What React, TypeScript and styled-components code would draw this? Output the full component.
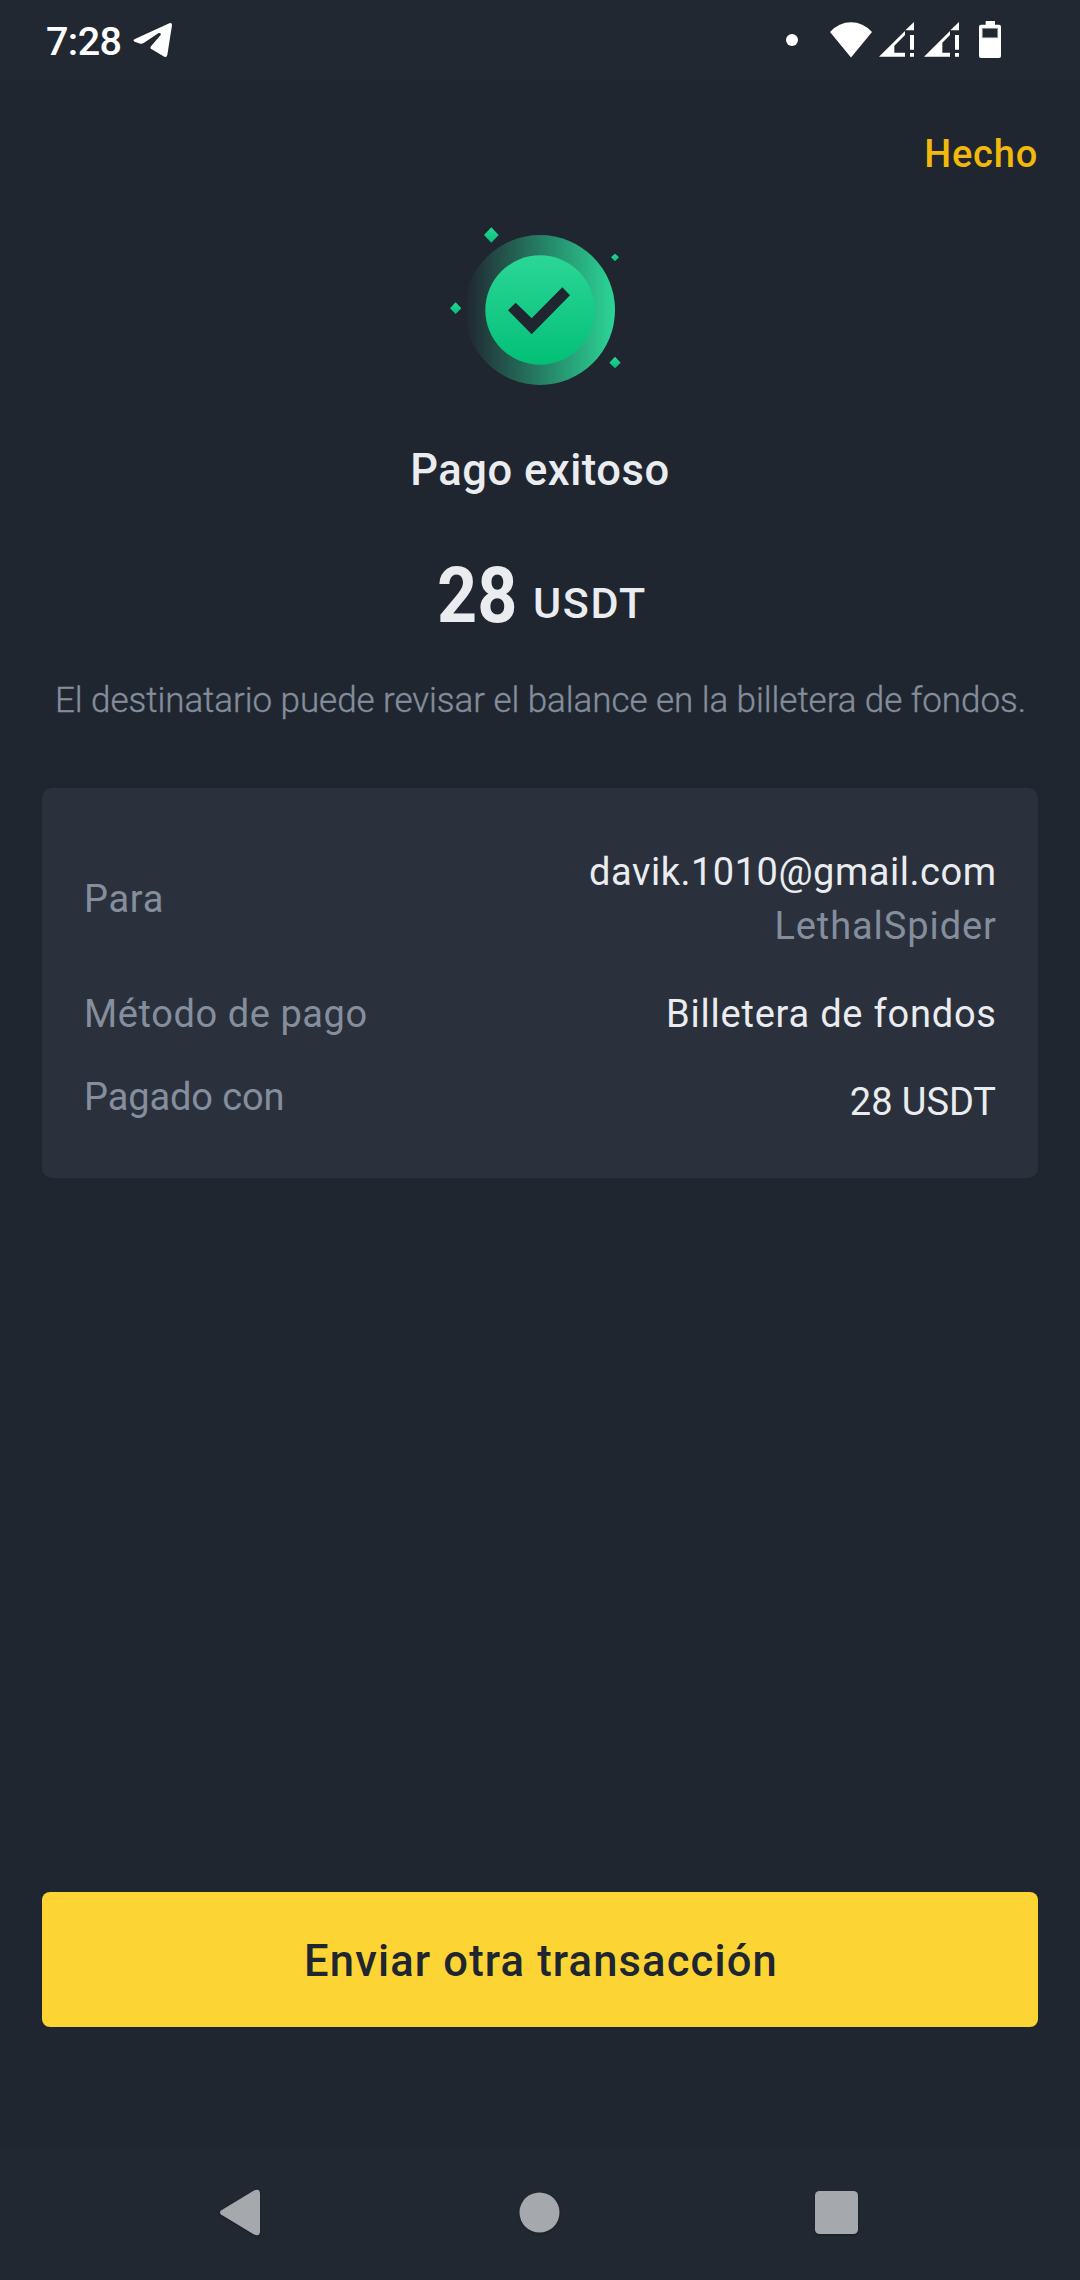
import React from "react";
import styled, { createGlobalStyle } from "styled-components";

const GlobalStyle = createGlobalStyle`
  * { box-sizing: border-box; }
  body { margin: 0; background: #202630; }
  svg { display: block; flex: none; }
`;

const Screen = styled.div`
  display: flex;
  flex-direction: column;
  width: 1080px;
  height: 2280px;
  background: #202630;
  color: #eaecef;
  font-family: Roboto, "Liberation Sans", sans-serif;
  overflow: hidden;
`;
const StatusBar = styled.header`
  display: flex;
  align-items: center;
  height: 80px;
  padding: 0 79px 0 46px;
  background: #222832;
`;
const Clock = styled.span`
  padding-top: 4px;
  color: #fff;
  font-size: 39.5px;
  font-weight: 500;
  line-height: 50px;
  letter-spacing: -0.6px;
`;
const StatusIcons = styled.div`
  display: flex;
  margin-left: auto;
`;
const Slot = styled.div<{ $gap: number }>`
  margin-left: ${(p) => p.$gap}px;
`;
const TopActions = styled.div`
  display: flex;
  justify-content: flex-end;
  height: 130px;
  padding: 49px 42px 0 0;
`;
const Done = styled.a`
  color: #f0b90b;
  font-size: 38px;
  font-weight: 500;
  line-height: 50px;
  letter-spacing: 0.8px;
`;
const Main = styled.main`
  display: flex;
  flex-direction: column;
  align-items: center;
  flex: 1;
`;
const Title = styled.h1`
  margin: 41px 0 0;
  font-size: 43.5px;
  font-weight: 500;
  line-height: 60px;
  letter-spacing: 0.52px;
  white-space: nowrap;
`;
const Amount = styled.div`
  display: flex;
  gap: 15.5px;
  height: 90px;
  margin: 49px 0 0 4px;
`;
const Value = styled.span`
  margin-right: -9px;
  font-size: 78px;
  font-weight: 700;
  line-height: 91px;
  transform: scaleX(0.897);
  transform-origin: left;
`;
const Unit = styled.span`
  margin-top: 23px;
  font-size: 43px;
  font-weight: 500;
  line-height: 60px;
  letter-spacing: 1.6px;
`;
const Hint = styled.p`
  margin: 36px 0 0 1px;
  color: #848e9c;
  font-size: 35px;
  font-weight: 300;
  line-height: 50px;
  letter-spacing: -0.06px;
  white-space: nowrap;
  -webkit-text-stroke: 0.35px #848e9c;
`;
const Card = styled.section`
  display: flex;
  flex-direction: column;
  gap: 34px;
  width: 996px;
  height: 390px;
  margin-top: 62px;
  padding: 57px 42px 49px;
  border-radius: 10px;
  background: #2b313c;
`;
const Row = styled.div<{ $top?: boolean }>`
  display: flex;
  justify-content: space-between;
  align-items: ${(p) => (p.$top ? "flex-start" : "center")};
`;
const Label = styled.span<{ $line?: number; $track: number }>`
  color: #848e9c;
  font-size: 38px;
  line-height: ${(p) => p.$line ?? 54}px;
  letter-spacing: ${(p) => p.$track}px;
`;
const Values = styled.div`
  display: flex;
  flex-direction: column;
  align-items: flex-end;
`;
const Detail = styled.span<{ $muted?: boolean; $track: number }>`
  margin-right: ${(p) => -p.$track}px;
  color: ${(p) => (p.$muted ? "#848e9c" : "#eaecef")};
  font-size: 38px;
  line-height: 54px;
  letter-spacing: ${(p) => p.$track}px;
`;
const Primary = styled.button`
  width: 996px;
  height: 135px;
  margin: auto 0 121px;
  padding: 5px 0 0 2px;
  border: 0;
  border-radius: 8px;
  background: #fcd535;
  color: #202630;
  font: 500 43.5px/60px Roboto, "Liberation Sans", sans-serif;
  letter-spacing: 1.16px;
`;
const NavBar = styled.nav`
  display: flex;
  height: 132px;
  background: #222832;
`;
const NavIcons = styled.svg`
  filter: drop-shadow(0 1px 1px rgba(0, 0, 0, 0.3));
`;

const Telegram = () => (
  <svg width="40" height="36" viewBox="400 70 120 108" fill="#fff">
    <path d="M404 122L509 74Q517 71 517 80L503 169Q501 177 494 174L455 151Q450 148 454 143L483 109Q485 102 477 103L432 133Q428 136 422 135L405 129Q399 126 404 122Z" />
  </svg>
);
const Wifi = () => (
  <svg width="42" height="40" viewBox="0 0 42 40">
    <path d="M0 12Q9 2.300 21 2.300T42 12L21 37.500Z" fill="#fff" />
  </svg>
);
const Signal = ({ notch }: { notch: number }) => (
  <svg width="35" height="40" viewBox="0 60 105 120" fill="#fff">
    <path d={`M0 170.500L78 93V105L${notch} ${183 - notch}V158H78V170.500ZM105 66V91H79ZM93 105H105V149H93ZM93 159H105V170.500H93Z`} />
  </svg>
);
const Battery = () => (
  <svg width="22" height="40" viewBox="0 60 66 120">
    <path d="M20 63H48V74H60Q66 74 66 80V168Q66 174 60 174H6Q0 174 0 168V80Q0 74 6 74H20Z" fill="#fff" />
    <path d="M10 85H56V113H10Z" fill="#222832" stroke="#969a9f" strokeWidth="2" />
  </svg>
);
const Success = () => (
  <svg width="220" height="190" viewBox="0 0 660 570">
    <defs>
      <linearGradient id="ring" x1="0" x2="1">
        <stop offset="0" stopColor="#2bd697" stopOpacity="0" />
        <stop offset="1" stopColor="#2bd697" />
      </linearGradient>
      <linearGradient id="disc" x1="0" x2="0" y1="0" y2="1">
        <stop offset="0" stopColor="#2bd697" />
        <stop offset="1" stopColor="#03c076" />
      </linearGradient>
    </defs>
    <circle cx="330" cy="300" r="225" fill="url(#ring)" />
    <circle cx="330" cy="300" r="164" fill="url(#disc)" />
    <path d="M234 301L257 278L305 325L397 232L420 256L305 373Z" fill="#202630" />
    <g fill="url(#disc)">
      <path d="M184 52L206 75L184 98L162 75Z" />
      <path d="M77 277L94 295L77 312L60 295Z" />
      <path d="M555 131L567 142L555 154L543 142Z" />
      <path d="M555 440L572 458L555 475L538 458Z" />
    </g>
  </svg>
);

export default function App() {
  return (
    <Screen>
      <GlobalStyle />
      <StatusBar>
        <Clock>7:28</Clock>
        <Slot $gap={12}><Telegram /></Slot>
        <StatusIcons>
          <svg width="12" height="40" viewBox="0 0 12 40">
            <circle cx="6" cy="20" r="6" fill="#fff" />
          </svg>
          <Slot $gap={32}><Wifi /></Slot>
          <Slot $gap={6.5}><Signal notch={46} /></Slot>
          <Slot $gap={10}><Signal notch={55} /></Slot>
          <Slot $gap={20.5}><Battery /></Slot>
        </StatusIcons>
      </StatusBar>
      <TopActions><Done>Hecho</Done></TopActions>
      <Main>
        <Success />
        <Title>Pago exitoso</Title>
        <Amount><Value>28</Value><Unit>USDT</Unit></Amount>
        <Hint>El destinatario puede revisar el balance en la billetera de fondos.</Hint>
        <Card>
          <Row>
            <Label $track={0.7}>Para</Label>
            <Values>
              <Detail $track={0.52}>davik.1010@gmail.com</Detail>
              <Detail $muted $track={0.92}>LethalSpider</Detail>
            </Values>
          </Row>
          <Row>
            <Label $track={0.58}>Método de pago</Label>
            <Detail $track={0.78}>Billetera de fondos</Detail>
          </Row>
          <Row $top>
            <Label $line={44} $track={-0.12}>Pagado con</Label>
            <Detail $track={-0.05}>28 USDT</Detail>
          </Row>
        </Card>
        <Primary>Enviar otra transacción</Primary>
      </Main>
      <NavBar>
        <NavIcons width="1080" height="132" viewBox="0 2148 1080 132" fill="#a5a9ae">
          <path d="M221 2210.500L254 2190.600Q260 2188 260 2194V2231Q260 2237 254 2234.500L221 2214.500Q219 2212.500 221 2210.500Z" />
          <circle cx="539.5" cy="2212.500" r="20" />
          <rect x="815" y="2191" width="43" height="43" rx="4.500" />
        </NavIcons>
      </NavBar>
    </Screen>
  );
}
